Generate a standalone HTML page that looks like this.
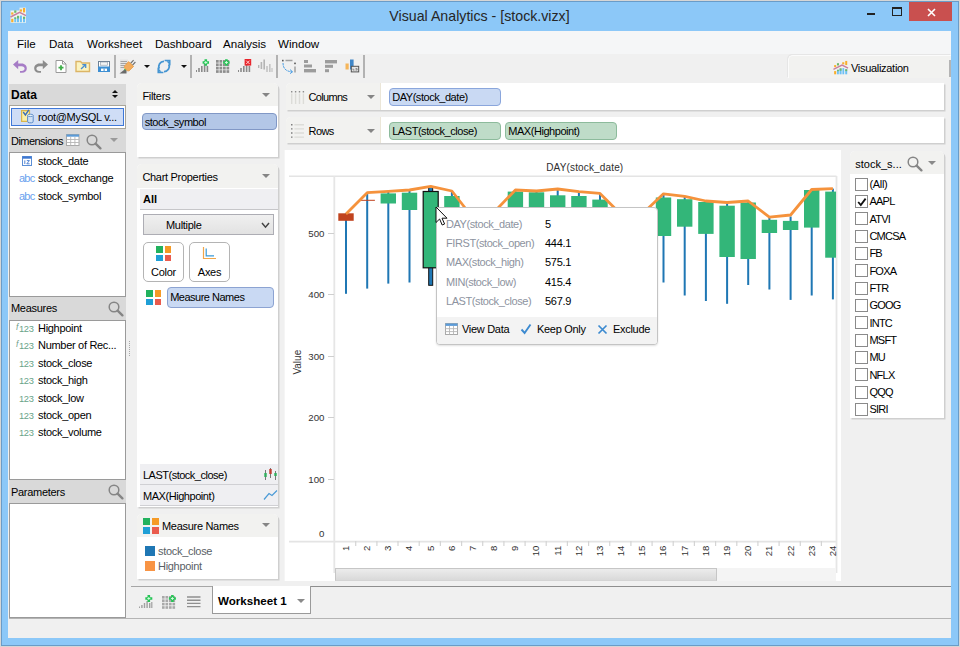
<!DOCTYPE html>
<html><head><meta charset="utf-8"><title>Visual Analytics - [stock.vizx]</title>
<style>
*{box-sizing:border-box;margin:0;padding:0}
html,body{width:960px;height:647px;overflow:hidden}
body{position:relative;background:#d6d6d6;font-family:"Liberation Sans",sans-serif;font-size:11px;color:#000;letter-spacing:-.3px}
.a{position:absolute}
.t{position:absolute;white-space:nowrap;line-height:14px;height:14px}
.lb{position:absolute;background:#fff;border:1px solid #9a9a9a}
.hd{position:absolute;background:#d9d9d9}
.card{position:absolute;background:#fff;border-radius:5px 5px 0 0;box-shadow:1.5px 1.5px .6px #cfcfcf}
.ch{position:absolute;left:0;top:0;right:0;background:#f2f2f0;border-radius:5px 5px 0 0}
.pill{position:absolute;border-radius:4px;border:1px solid #8fa6d3;background:#b3c7e7;line-height:16px;padding-left:2.2px;white-space:nowrap;height:18px;letter-spacing:-.45px}
.tri{position:absolute;width:0;height:0;border-left:4px solid transparent;border-right:4px solid transparent;border-top:4px solid #858585}
.cb{position:absolute;left:855px;width:12.6px;height:12.6px;border:1px solid #8a8a8a;background:#fff}
.cl{position:absolute;left:869.4px;line-height:14px;height:14px;white-space:nowrap}
.mi{position:absolute;top:35.7px;font-size:11.6px;letter-spacing:0;line-height:16px;white-space:nowrap}
</style></head><body>
<div class="a" style="left:1px;top:1px;width:958px;height:645px;border:1px solid #6a9cc8;background:#8cc8f8"></div>
<div class="t" style="left:0;width:960px;top:7px;text-align:center;font-size:14.2px;line-height:18px;height:18px;letter-spacing:0;color:#262626;text-indent:-1px">Visual Analytics - [stock.vizx]</div>
<!-- app icon -->
<svg class="a" style="left:10px;top:7px" width="17" height="17" viewBox="0 0 17 17">
<rect x=".5" y="3.5" width="15.5" height="12.3" fill="#f8f7ee" opacity=".92"/><rect x="9.5" y=".6" width="6.5" height="4" fill="#f8f7ee" opacity=".8"/>
<rect x="1.2" y="11.8" width="2.2" height="3.4" fill="#f8ae2c"/>
<rect x="4.3" y="10.4" width="1.9" height="4.8" fill="#6cc0f6"/><rect x="4.3" y="10.4" width="1.9" height="1.5" fill="#6db86b"/>
<rect x="7" y="9.2" width="2.1" height="6" fill="#6cc0f6"/><rect x="7" y="8.8" width="2.1" height="2.6" fill="#6db86b"/>
<rect x="10" y="8.6" width="1.9" height="6.6" fill="#6cc0f6"/>
<rect x="13" y="9.8" width="2.1" height="5.4" fill="#6cc0f6"/><rect x="13" y="9.8" width="2.1" height="2" fill="#6db86b"/>
<rect x="1.2" y="5.4" width="2.2" height="2.2" fill="#f8ae2c"/><rect x="4.2" y="3.4" width="2.2" height="2.4" fill="#6db86b"/>
<rect x="9.8" y="2.4" width="2.2" height="2.2" fill="#f8ae2c"/><rect x="13" y="1" width="2.1" height="4.4" fill="#f8ae2c"/>
<path d="M.5 10 L9.6 5.4 L16 8.6" fill="none" stroke="#c9809f" stroke-width="1.5"/>
</svg>
<!-- window buttons -->
<div class="a" style="left:867px;top:13px;width:8px;height:2px;background:#222"></div>
<div class="a" style="left:892px;top:7px;width:10px;height:9px;border:1px solid #222;border-top-width:2px"></div>
<div class="a" style="left:909px;top:2px;width:43px;height:19px;background:#c9504f"></div>
<svg class="a" style="left:926.5px;top:7.5px" width="9" height="9" viewBox="0 0 9 9"><path d="M1 1 L8 8 M8 1 L1 8" stroke="#fff" stroke-width="1.6" fill="none"/></svg>
<div class="a" style="left:8px;top:31px;width:943px;height:607px;background:#f0f0f0"></div>
<div class="a" style="left:8px;top:31px;width:943px;height:23px;background:#f5f6f7"></div>
<div class="mi" style="left:17px">File</div>
<div class="mi" style="left:49px">Data</div>
<div class="mi" style="left:87px">Worksheet</div>
<div class="mi" style="left:155px">Dashboard</div>
<div class="mi" style="left:223px">Analysis</div>
<div class="mi" style="left:278px">Window</div>
<!-- toolbar -->
<svg class="a" style="left:12px;top:59px" width="16" height="15" viewBox="0 0 16 15"><path d="M6.2 1 L1 5.6 L6.2 10.2 V7.2 H9.5 C11.6 7.2 12.6 8.3 12.6 9.6 C12.6 11 11.5 11.9 9.8 11.9 H8 V13.8 H10 C13 13.8 14.8 12 14.8 9.6 C14.8 7 13 4.6 9.6 4.6 H6.2 Z" fill="#a67cc6"/></svg>
<svg class="a" style="left:33px;top:59px" width="16" height="15" viewBox="0 0 16 15"><path d="M9.8 1 L15 5.6 L9.8 10.2 V7.2 H6.5 C4.4 7.2 3.4 8.3 3.4 9.6 C3.4 11 4.5 11.9 6.2 11.9 H8 V13.8 H6 C3 13.8 1.2 12 1.2 9.6 C1.2 7 3 4.6 6.4 4.6 H9.8 Z" fill="#8c8c8c"/></svg>
<svg class="a" style="left:55px;top:60px" width="12" height="14" viewBox="0 0 12 14"><path d="M1 .5 H7.5 L11 4 V12.5 H1 Z" fill="#fff" stroke="#9a9a9a"/><path d="M7.5 .5 V4 H11" fill="none" stroke="#9a9a9a"/><path d="M6 5.2 V10.2 M3.5 7.7 H8.5" stroke="#3fae49" stroke-width="1.8"/></svg>
<svg class="a" style="left:75px;top:60px" width="16" height="13" viewBox="0 0 16 13"><path d="M1 1.5 H5.5 L7 3 H14.5 V11.5 H1 Z" fill="#fbf3c0" stroke="#dcb566" stroke-width="1.4"/><path d="M6 9 L10.5 4.8 M7.3 4.6 H10.7 V8" fill="none" stroke="#4a8fd0" stroke-width="1.3"/></svg>
<svg class="a" style="left:97px;top:60px" width="14" height="13" viewBox="0 0 14 13"><rect x="1.5" y="1.5" width="11" height="10" fill="#fff" stroke="#6f8296" stroke-width="1"/><rect x="1" y="6.5" width="12" height="5.5" fill="#3d8fd3"/><rect x="3.6" y="2" width="6.8" height="3.2" fill="#f4f4f4" stroke="#8796a6" stroke-width=".6"/><rect x="4" y="8.6" width="6" height="2.4" fill="#fff"/><rect x="6.6" y="8.6" width="1" height="2.4" fill="#3d8fd3"/></svg>
<div class="a" style="left:114px;top:55px;width:2px;height:23px;background:#b2b2b2"></div>
<svg class="a" style="left:119px;top:59px" width="17" height="15" viewBox="0 0 17 15"><rect x="1" y=".5" width="8" height="13" fill="#e4e4e4"/><path d="M1.5 2.5 H8 M1.5 4.5 H8 M1.5 6.5 H6 M1.5 8.5 H5" stroke="#a4a4a4" stroke-width="1"/><path d="M.5 14.5 L7.5 14.5 L7.5 9 Z" fill="#6a6a6a"/><path d="M5.6 11 L7 9.6" stroke="#27c24c" stroke-width="1.6"/><path d="M11.5 4.5 L14.6 1.2 M13.3 6.3 L16.4 3" stroke="#6e6e6e" stroke-width="1.1"/><path d="M5.4 7.2 L9.6 2.6 L14.6 7.4 L10.2 11.8 C8.6 12.6 5 9.6 5.4 7.2 Z" fill="#f2ac5c" stroke="#e79a42" stroke-width=".8"/></svg>
<div class="tri" style="left:144px;top:65px;border-left-width:3px;border-right-width:3px;border-top:3px solid #111"></div>
<svg class="a" style="left:156px;top:59px" width="16" height="15" viewBox="0 0 16 15"><path d="M8 2.4 A5.1 5.1 0 0 0 3.2 9.6" fill="none" stroke="#4595d2" stroke-width="1.8"/><path d="M8 12.6 A5.1 5.1 0 0 0 12.8 5.4" fill="none" stroke="#4595d2" stroke-width="1.8"/><path d="M8.6 1.5 H13.7 V6.4" fill="none" stroke="#4595d2" stroke-width="1.7"/><path d="M7.4 13.5 H2.3 V8.6" fill="none" stroke="#4595d2" stroke-width="1.7"/><path d="M10.4 2.2 L13 2.2 L13 5 Z M5.6 12.8 L3 12.8 L3 10 Z" fill="#4595d2"/></svg>
<div class="tri" style="left:181px;top:65px;border-left-width:3px;border-right-width:3px;border-top:3px solid #111"></div>
<div class="a" style="left:190px;top:55px;width:2px;height:23px;background:#b2b2b2"></div>
<svg class="a" style="left:196px;top:59px" width="14" height="14" viewBox="0 0 14 14"><rect x="0" y="11" width="1" height="2" fill="#8a8a8a"/><rect x="2.2" y="9" width="1.6" height="4" fill="#8a8a8a"/><rect x="5" y="7" width="1.6" height="6" fill="#8a8a8a"/><rect x="7.8" y="5" width="1.6" height="8" fill="#8a8a8a"/><rect x="10.6" y="7" width="1.6" height="6" fill="#8a8a8a"/><path d="M9.8 .3 v6.4 M6.6 3.5 h6.4" stroke="#25c455" stroke-width="2.6"/><path d="M9.8 2 v3 M8.3 3.5 h3" stroke="#d8ffe2" stroke-width=".9"/></svg>
<svg class="a" style="left:216px;top:59px" width="15" height="14" viewBox="0 0 15 14"><rect x="0" y="1" width="2.7" height="2.7" fill="#8e8e8e"/><rect x="3.5" y="1" width="2.7" height="2.7" fill="#8e8e8e"/><rect x="7" y="1" width="2.7" height="2.7" fill="#8e8e8e"/><rect x="10.5" y="1" width="2.7" height="2.7" fill="#8e8e8e"/><rect x="0" y="4.4" width="2.7" height="2.7" fill="#8e8e8e"/><rect x="3.5" y="4.4" width="2.7" height="2.7" fill="#8e8e8e"/><rect x="7" y="4.4" width="2.7" height="2.7" fill="#8e8e8e"/><rect x="10.5" y="4.4" width="2.7" height="2.7" fill="#8e8e8e"/><rect x="0" y="7.8" width="2.7" height="2.7" fill="#8e8e8e"/><rect x="3.5" y="7.8" width="2.7" height="2.7" fill="#8e8e8e"/><rect x="7" y="7.8" width="2.7" height="2.7" fill="#8e8e8e"/><rect x="10.5" y="7.8" width="2.7" height="2.7" fill="#8e8e8e"/><rect x="0" y="11.2" width="2.7" height="2.7" fill="#8e8e8e"/><rect x="3.5" y="11.2" width="2.7" height="2.7" fill="#8e8e8e"/><rect x="7" y="11.2" width="2.7" height="2.7" fill="#8e8e8e"/><rect x="10.5" y="11.2" width="2.7" height="2.7" fill="#8e8e8e"/><path d="M10.4 .3 v6.4 M7.2 3.5 h6.4" stroke="#25c455" stroke-width="2.6"/><path d="M10.4 2 v3 M8.9 3.5 h3" stroke="#d8ffe2" stroke-width=".9"/></svg>
<svg class="a" style="left:238px;top:59px" width="14" height="14" viewBox="0 0 14 14"><rect x="0" y="11" width="1" height="2" fill="#8a8a8a"/><rect x="2.2" y="9" width="1.6" height="4" fill="#8a8a8a"/><rect x="5" y="7" width="1.6" height="6" fill="#8a8a8a"/><rect x="7.8" y="5" width="1.6" height="8" fill="#8a8a8a"/><rect x="10.6" y="7" width="1.6" height="6" fill="#8a8a8a"/><rect x="6.6" y="0" width="6.6" height="6.6" fill="#e8262d"/><path d="M8.2 1.6 l3.4 3.4 M11.6 1.6 l-3.4 3.4" stroke="#ffd0d0" stroke-width="1"/></svg>
<svg class="a" style="left:258px;top:59px" width="15" height="14" viewBox="0 0 15 14"><rect x="0" y="6" width="1.4" height="3" fill="#b4b4b4"/><rect x="2.6" y="3" width="1.6" height="7" fill="#b4b4b4"/><rect x="5.4" y="0.5" width="1.6" height="10" fill="#b4b4b4"/><rect x="8.2" y="7" width="1.6" height="6" fill="#c4c4c4"/><rect x="11" y="5" width="1.6" height="8" fill="#c4c4c4"/><rect x="13.4" y="9" width="1.2" height="4" fill="#c4c4c4"/></svg>
<div class="a" style="left:276px;top:55px;width:2px;height:23px;background:#b2b2b2"></div>
<svg class="a" style="left:281px;top:59px" width="16" height="15" viewBox="0 0 16 15"><path d="M4.5 1.5 H11.5" stroke="#a0a0a0" stroke-width="1.5"/><rect x="1" y=".8" width="1.6" height="1.6" fill="#555"/><rect x="13.2" y="3.6" width="1.6" height="1.6" fill="#555"/><path d="M14 7.5 V13.5" stroke="#a0a0a0" stroke-width="1.5"/><path d="M2 4 C2 9.5 5 12.5 11 12.8" fill="none" stroke="#4a9ee4" stroke-width="1" stroke-dasharray="2.4 .8"/><path d="M9 10.6 L11.6 12.8 L9 14.6" fill="none" stroke="#4a9ee4" stroke-width="1"/></svg>
<svg class="a" style="left:304px;top:59px" width="13" height="14" viewBox="0 0 13 14"><rect x="0" y="1" width="4" height="3" fill="#9c9c9c"/><rect x="0" y="5.5" width="8" height="3" fill="#9c9c9c"/><rect x="0" y="10" width="12" height="3.4" fill="#9c9c9c"/></svg>
<svg class="a" style="left:325px;top:59px" width="13" height="14" viewBox="0 0 13 14"><rect x="0" y="1" width="12" height="3.4" fill="#9c9c9c"/><rect x="0" y="5.8" width="8" height="3" fill="#9c9c9c"/><rect x="0" y="10.2" width="4" height="3" fill="#9c9c9c"/></svg>
<svg class="a" style="left:345px;top:59px" width="15" height="14" viewBox="0 0 15 14"><rect x="0.5" y="4.5" width="3.2" height="6" fill="#f5b55a"/><rect x="5" y="0.5" width="3.6" height="10" fill="#3f86c8"/><rect x="6.3" y="7.3" width="7.4" height="5.6" fill="#e6e6e6" stroke="#555" stroke-width="1"/><path d="M8 11 h1.5 M10.5 11 h1.6 M8 9.6 v1.5 M10.5 9.6 h1.6 v1.5" stroke="#666" stroke-width=".7" fill="none"/></svg>
<div class="a" style="left:363px;top:55px;width:2px;height:23px;background:#b2b2b2"></div>
<div class="a" style="left:788px;top:55px;width:163px;height:23px;background:#f2f2f0;border:1px solid #fbfbfb;border-bottom:none;border-right:none;border-radius:5px 0 0 0;box-shadow:-1px -1px 0 #e6e6e6"></div>
<div class="a" style="left:949px;top:60px;width:2px;height:17px;background:#b4b4b4"></div>
<svg class="a" style="left:833px;top:60px" width="16" height="16" viewBox="0 0 17 17">
<rect x="1.2" y="11.8" width="2.2" height="3.4" fill="#f8ae2c"/>
<rect x="4.3" y="10.4" width="1.9" height="4.8" fill="#6cc0f6"/><rect x="4.3" y="10.4" width="1.9" height="1.5" fill="#6db86b"/>
<rect x="7" y="9.2" width="2.1" height="6" fill="#6cc0f6"/><rect x="7" y="8.8" width="2.1" height="2.6" fill="#6db86b"/>
<rect x="10" y="8.6" width="1.9" height="6.6" fill="#6cc0f6"/>
<rect x="13" y="9.8" width="2.1" height="5.4" fill="#6cc0f6"/><rect x="13" y="9.8" width="2.1" height="2" fill="#6db86b"/>
<rect x="1.2" y="5.4" width="2.2" height="2.2" fill="#f8ae2c"/><rect x="4.2" y="3.4" width="2.2" height="2.4" fill="#6db86b"/>
<rect x="9.8" y="2.4" width="2.2" height="2.2" fill="#f8ae2c"/><rect x="13" y="1" width="2.1" height="4.4" fill="#f8ae2c"/>
<path d="M.5 10 L9.6 5.4 L16 8.6" fill="none" stroke="#c9809f" stroke-width="1.5"/></svg>
<div class="t" style="left:851px;top:61px">Visualization</div>
<!-- left data panel -->
<div class="hd" style="left:9px;top:84px;width:117px;height:22px"></div>
<div class="t" style="left:11px;top:88px;font-weight:bold;font-size:12px;letter-spacing:0">Data</div>
<div class="tri" style="left:112px;top:95.3px;border-left-width:3px;border-right-width:3px;border-top:3px solid #111"></div>
<div class="tri" style="left:112px;top:90.3px;border-left-width:3px;border-right-width:3px;border-top:none;border-bottom:3px solid #111"></div>
<div class="lb" style="left:9px;top:105px;width:117px;height:24px;border-color:#a8a59a"></div>
<div class="a" style="left:11px;top:108px;width:113px;height:18px;background:#cfddf6;border:1px solid #3f78d8"></div>
<svg class="a" style="left:21px;top:109px" width="14" height="15" viewBox="0 0 14 15"><path d="M.6 1.6 H8.5 V12.4 H.6 Z" fill="#fbf0a8" stroke="#d9b54a" stroke-width="1.2"/><path d="M2.2 3 L4.4 6 L7.8 .8" fill="none" stroke="#3c6fb8" stroke-width="1.4"/><rect x="6.6" y="5.8" width="5.6" height="8" rx="1.6" fill="#cfe0f4" stroke="#5e8cc8" stroke-width="1"/><ellipse cx="9.4" cy="6.4" rx="2.8" ry="1.2" fill="#e8f1fb" stroke="#5e8cc8" stroke-width=".9"/></svg>
<div class="t" style="left:38px;top:110px">root@MySQL v...</div>
<div class="hd" style="left:9px;top:129px;width:117px;height:24px"></div>
<div class="t" style="left:11px;top:134px;letter-spacing:-.55px">Dimensions</div>
<svg class="a" style="left:66px;top:134px" width="14" height="12" viewBox="0 0 14 12"><rect x=".5" y=".5" width="12.5" height="11" fill="#fff" stroke="#a9a9a9"/><rect x=".5" y=".5" width="12.5" height="2.2" fill="#5b9bd8"/><path d="M.5 5.5 H13 M.5 8.5 H13 M4.7 2.7 V11.5 M8.9 2.7 V11.5" stroke="#b5b5b5" stroke-width=".9"/></svg>
<svg class="a" style="left:86px;top:134px" width="16" height="16" viewBox="0 0 16 16"><circle cx="6" cy="6" r="4.8" fill="none" stroke="#858585" stroke-width="1.5"/><path d="M9.6 9.6 L14.4 14.4" stroke="#858585" stroke-width="2.3" stroke-linecap="round"/></svg>
<div class="tri" style="left:110px;top:138px;border-top-color:#9a9a9a"></div>
<div class="lb" style="left:9px;top:152px;width:117px;height:145px"></div>
<svg class="a" style="left:22px;top:156px" width="10" height="10" viewBox="0 0 10 10"><rect x=".5" y=".5" width="9" height="9" fill="#fff" stroke="#5c8fd6"/><rect x=".5" y=".5" width="9" height="2.2" fill="#3f78d0"/><path d="M2.8 4.4 V8 M4.8 4.6 H7.4 L4.8 7.8 H7.6" stroke="#3f78d0" stroke-width=".9" fill="none"/></svg>
<div class="t" style="left:38px;top:154px">stock_date</div>
<div class="t" style="left:38px;top:171px">stock_exchange</div>
<div class="t" style="left:19px;top:171px;color:#6a9fee;font-size:11px;letter-spacing:-.75px">abc</div>
<div class="t" style="left:38px;top:188.5px">stock_symbol</div>
<div class="t" style="left:19px;top:188.5px;color:#6a9fee;font-size:11px;letter-spacing:-.75px">abc</div>
<div class="hd" style="left:9px;top:297px;width:117px;height:23px"></div>
<div class="t" style="left:11px;top:301px">Measures</div>
<svg class="a" style="left:108px;top:301px" width="16" height="16" viewBox="0 0 16 16"><circle cx="6" cy="6" r="4.8" fill="none" stroke="#858585" stroke-width="1.5"/><path d="M9.6 9.6 L14.4 14.4" stroke="#858585" stroke-width="2.3" stroke-linecap="round"/></svg>
<div class="lb" style="left:9px;top:320px;width:117px;height:160px"></div>
<div class="t" style="left:38px;top:321px">Highpoint</div>
<div class="t" style="left:19px;top:322px;color:#68a388;font-size:9.3px;letter-spacing:-.3px">123</div>
<div class="t" style="left:16px;top:320px;color:#6fa08c;font-size:8.5px;font-style:italic">f</div>
<div class="t" style="left:38px;top:338px">Number of Rec...</div>
<div class="t" style="left:19px;top:339px;color:#68a388;font-size:9.3px;letter-spacing:-.3px">123</div>
<div class="t" style="left:16px;top:337px;color:#6fa08c;font-size:8.5px;font-style:italic">f</div>
<div class="t" style="left:38px;top:356px">stock_close</div>
<div class="t" style="left:19px;top:357px;color:#68a388;font-size:9.3px;letter-spacing:-.3px">123</div>
<div class="t" style="left:38px;top:373px">stock_high</div>
<div class="t" style="left:19px;top:374px;color:#68a388;font-size:9.3px;letter-spacing:-.3px">123</div>
<div class="t" style="left:38px;top:391px">stock_low</div>
<div class="t" style="left:19px;top:392px;color:#68a388;font-size:9.3px;letter-spacing:-.3px">123</div>
<div class="t" style="left:38px;top:408px">stock_open</div>
<div class="t" style="left:19px;top:409px;color:#68a388;font-size:9.3px;letter-spacing:-.3px">123</div>
<div class="t" style="left:38px;top:425px">stock_volume</div>
<div class="t" style="left:19px;top:426px;color:#68a388;font-size:9.3px;letter-spacing:-.3px">123</div>
<div class="a" style="left:129px;top:341px;width:1px;height:15px;background:repeating-linear-gradient(#a8a8a8 0 1px,transparent 1px 2px)"></div>
<div class="hd" style="left:9px;top:480px;width:117px;height:23px"></div>
<div class="t" style="left:11px;top:485px">Parameters</div>
<svg class="a" style="left:108px;top:484px" width="16" height="16" viewBox="0 0 16 16"><circle cx="6" cy="6" r="4.8" fill="none" stroke="#858585" stroke-width="1.5"/><path d="M9.6 9.6 L14.4 14.4" stroke="#858585" stroke-width="2.3" stroke-linecap="round"/></svg>
<div class="lb" style="left:9px;top:503px;width:117px;height:115px"></div>
<!-- middle column -->
<div class="card" style="left:137.3px;top:83.4px;width:140.8px;height:73.7px"><div class="ch" style="height:23px"></div></div>
<div class="t" style="left:142.4px;top:89px">Filters</div>
<div class="tri" style="left:262px;top:93px"></div>
<div class="pill" style="left:141.5px;top:112.5px;width:135px;height:17.5px;border-color:#8198c6">stock_symbol</div>
<div class="card" style="left:137.3px;top:164.3px;width:140.8px;height:342.4px"><div class="ch" style="height:24px"></div></div>
<div class="t" style="left:142.4px;top:170px">Chart Properties</div>
<div class="tri" style="left:262px;top:174px"></div>
<div class="a" style="left:139.5px;top:188.8px;width:138.6px;height:21px;background:#efeff2;border-bottom:1px solid #c6c6c9"></div>
<div class="t" style="left:143px;top:192px;font-weight:bold;letter-spacing:0">All</div>
<div class="a" style="left:143.3px;top:214.3px;width:131px;height:20.6px;background:linear-gradient(#f0f0f0,#e2e2e2);border:1px solid #adadb4"></div>
<div class="t" style="left:166px;top:218px">Multiple</div>
<svg class="a" style="left:261px;top:221.8px" width="9" height="7" viewBox="0 0 9 7"><path d="M1 1 L4.5 5.2 L8 1" fill="none" stroke="#444" stroke-width="1.5"/></svg>
<div class="a" style="left:143px;top:242px;width:41px;height:40px;background:#fff;border:1px solid #b4b4b4;border-radius:5px"></div>
<div class="a" style="left:156px;top:246px;width:6.8px;height:6.8px;background:#22b25e"></div><div class="a" style="left:164.6px;top:246px;width:6.8px;height:6.8px;background:#f59a26"></div><div class="a" style="left:156px;top:254.6px;width:6.8px;height:6.8px;background:#1f9fd6"></div><div class="a" style="left:164.6px;top:254.6px;width:6.8px;height:6.8px;background:#ea5b4d"></div>
<div class="t" style="left:143px;top:265px;width:41px;text-align:center">Color</div>
<div class="a" style="left:189px;top:242px;width:41px;height:40px;background:#fff;border:1px solid #b4b4b4;border-radius:5px"></div>
<svg class="a" style="left:202px;top:246px" width="15" height="14" viewBox="0 0 15 14"><path d="M1.5 1 V12.5 H14" fill="none" stroke="#f0a64a" stroke-width="1.2"/><path d="M4.2 2.5 V9.8 H12" fill="none" stroke="#3a9bd8" stroke-width="1.2"/></svg>
<div class="t" style="left:189px;top:265px;width:41px;text-align:center">Axes</div>
<div class="a" style="left:146px;top:290px;width:6.8px;height:6.8px;background:#22b25e"></div><div class="a" style="left:154.6px;top:290px;width:6.8px;height:6.8px;background:#f59a26"></div><div class="a" style="left:146px;top:298.6px;width:6.8px;height:6.8px;background:#1f9fd6"></div><div class="a" style="left:154.6px;top:298.6px;width:6.8px;height:6.8px;background:#ea5b4d"></div>
<div class="pill" style="left:167px;top:287px;width:107px;height:21px;line-height:19px;background:#c9d9f3;border-color:#8ca3d2;letter-spacing:-.5px">Measure Names</div>
<div class="a" style="left:139.5px;top:464px;width:138.6px;height:21px;background:#efeff2;border-bottom:1px solid #d0d0d4"></div>
<div class="a" style="left:139.5px;top:485px;width:138.6px;height:21px;background:#efeff2;border-bottom:1px solid #d0d0d4"></div>
<div class="t" style="left:143px;top:468px;letter-spacing:-.5px">LAST(stock_close)</div>
<div class="t" style="left:143px;top:489px;letter-spacing:-.45px">MAX(Highpoint)</div>
<svg class="a" style="left:263px;top:467px" width="15" height="14" viewBox="0 0 15 14"><path d="M2.5 3 V13 M7.5 1 V11 M12.5 4 V13" stroke="#777" stroke-width="1"/><rect x="1.3" y="6" width="2.4" height="4" fill="#2fae5c"/><rect x="6.3" y="2" width="2.4" height="5" fill="#c23b2e"/><rect x="11.3" y="6" width="2.4" height="3" fill="#2fae5c"/></svg>
<svg class="a" style="left:263px;top:489px" width="15" height="12" viewBox="0 0 15 12"><path d="M1 10.5 L6 4.5 L9 6.5 L14 1.5" fill="none" stroke="#4a9ad6" stroke-width="1.2"/></svg>
<div class="card" style="left:137.3px;top:513.6px;width:140.8px;height:65.4px"><div class="ch" style="height:23px"></div></div>
<div class="a" style="left:143px;top:518px;width:7px;height:7px;background:#22b25e"></div><div class="a" style="left:152px;top:518px;width:7px;height:7px;background:#f59a26"></div><div class="a" style="left:143px;top:527px;width:7px;height:7px;background:#1f9fd6"></div><div class="a" style="left:152px;top:527px;width:7px;height:7px;background:#ea5b4d"></div>
<div class="t" style="left:162px;top:519px">Measure Names</div>
<div class="tri" style="left:262px;top:523px"></div>
<div class="a" style="left:145px;top:546px;width:10px;height:10px;background:#1f77b4"></div>
<div class="t" style="left:158px;top:544px;color:#5a5f66">stock_close</div>
<div class="a" style="left:145px;top:561px;width:10px;height:10px;background:#f89444"></div>
<div class="t" style="left:158px;top:559px;color:#5a5f66">Highpoint</div>
<div class="card" style="left:285.6px;top:83.4px;width:658.4px;height:26.5px;border-radius:5px 0 0 0"><div class="a" style="left:0;top:0;width:95.5px;height:100%;background:#f2f2f0;border-radius:5px 0 0 0;border-right:1px solid #ebe6d8"></div></div>
<div class="t" style="left:308.6px;top:90px;letter-spacing:-.7px">Columns</div>
<div class="tri" style="left:367px;top:95px"></div>
<div class="pill" style="left:389px;top:88px;width:112px;background:#c9d9f3;border-color:#8aa6dc">DAY(stock_date)</div>
<div class="card" style="left:285.6px;top:116.7px;width:658.4px;height:26.4px;border-radius:5px 0 0 0"><div class="a" style="left:0;top:0;width:95.5px;height:100%;background:#f2f2f0;border-radius:5px 0 0 0;border-right:1px solid #ebe6d8"></div></div>
<div class="t" style="left:308.6px;top:124px;letter-spacing:-.6px">Rows</div>
<div class="tri" style="left:367px;top:129px"></div>
<div class="pill" style="left:389px;top:122px;width:112px;background:#bfdcc8;border-color:#8dbb9c">LAST(stock_close)</div>
<div class="pill" style="left:505px;top:122px;width:112px;background:#bfdcc8;border-color:#8dbb9c">MAX(Highpoint)</div>
<svg class="a" style="left:290px;top:90px" width="16" height="15" viewBox="0 0 16 15"><path d="M1.7 3.4 V14 M5.6 3.4 V14 M9.5 3.4 V14 M13.4 3.4 V14" stroke="#dcdcd8" stroke-width="1.4"/><path d="M1.7 1 V2.5 M5.6 1 V2.5 M9.5 1 V2.5 M13.4 1 V2.5" stroke="#8e8e8e" stroke-width="1.4"/></svg>
<svg class="a" style="left:290px;top:123px" width="16" height="16" viewBox="0 0 16 16"><path d="M4.4 1.8 H14 M4.4 5.9 H14 M4.4 10 H14 M4.4 14.1 H14" stroke="#dcdcd8" stroke-width="1.4"/><path d="M1 1.8 H2.5 M1 5.9 H2.5 M1 10 H2.5 M1 14.1 H2.5" stroke="#7e7e7e" stroke-width="1.4"/></svg>
<!-- chart panel -->
<div class="a" style="left:284px;top:150px;width:1px;height:431px;background:#f5f5f5"></div>
<div class="a" style="left:285px;top:150px;width:556px;height:431px;background:#fff"></div>
<svg class="a" style="left:285px;top:150px;font-family:'Liberation Sans',sans-serif;letter-spacing:0" width="556" height="431" viewBox="285 150 556 431">
<text x="584.8" y="171" font-size="10" letter-spacing=".15" text-anchor="middle" fill="#2e2e2e">DAY(stock_date)</text>
<path d="M289 176.3 H836.5 M289 541.6 H836.5" stroke="#e4e4e4" stroke-width="1.6" fill="none"/>
<path d="M334.3 176 V573 M836.5 176 V573" stroke="#e6e6e6" stroke-width="1.8" fill="none"/>
<path d="M328 479.5 H334" stroke="#cfcfcf" stroke-width="1"/><text x="324.5" y="482.9" font-size="9.7" text-anchor="end" fill="#333">100</text>
<path d="M328 417.5 H334" stroke="#cfcfcf" stroke-width="1"/><text x="324.5" y="421.3" font-size="9.7" text-anchor="end" fill="#333">200</text>
<path d="M328 356.5 H334" stroke="#cfcfcf" stroke-width="1"/><text x="324.5" y="359.7" font-size="9.7" text-anchor="end" fill="#333">300</text>
<path d="M328 294.5 H334" stroke="#cfcfcf" stroke-width="1"/><text x="324.5" y="298.1" font-size="9.7" text-anchor="end" fill="#333">400</text>
<path d="M328 233.5 H334" stroke="#cfcfcf" stroke-width="1"/><text x="324.5" y="236.5" font-size="9.7" text-anchor="end" fill="#333">500</text>
<text x="324.5" y="536.8" font-size="9.7" text-anchor="end" fill="#333">0</text>
<text transform="translate(301,362.2) rotate(-90)" font-size="10" text-anchor="middle" fill="#333">Value</text>
<path d="M355.7 541 V546" stroke="#d4d4d4" stroke-width="1.2"/><text transform="translate(348.9,545.7) rotate(-90)" font-size="9.6" text-anchor="end" fill="#333">1</text>
<path d="M376.9 541 V546" stroke="#d4d4d4" stroke-width="1.2"/><text transform="translate(370.1,545.7) rotate(-90)" font-size="9.6" text-anchor="end" fill="#333">2</text>
<path d="M398.0 541 V546" stroke="#d4d4d4" stroke-width="1.2"/><text transform="translate(391.2,545.7) rotate(-90)" font-size="9.6" text-anchor="end" fill="#333">3</text>
<path d="M419.2 541 V546" stroke="#d4d4d4" stroke-width="1.2"/><text transform="translate(412.4,545.7) rotate(-90)" font-size="9.6" text-anchor="end" fill="#333">4</text>
<path d="M440.4 541 V546" stroke="#d4d4d4" stroke-width="1.2"/><text transform="translate(433.6,545.7) rotate(-90)" font-size="9.6" text-anchor="end" fill="#333">5</text>
<path d="M461.6 541 V546" stroke="#d4d4d4" stroke-width="1.2"/><text transform="translate(454.8,545.7) rotate(-90)" font-size="9.6" text-anchor="end" fill="#333">6</text>
<path d="M482.7 541 V546" stroke="#d4d4d4" stroke-width="1.2"/><text transform="translate(475.9,545.7) rotate(-90)" font-size="9.6" text-anchor="end" fill="#333">7</text>
<path d="M503.9 541 V546" stroke="#d4d4d4" stroke-width="1.2"/><text transform="translate(497.1,545.7) rotate(-90)" font-size="9.6" text-anchor="end" fill="#333">8</text>
<path d="M525.1 541 V546" stroke="#d4d4d4" stroke-width="1.2"/><text transform="translate(518.3,545.7) rotate(-90)" font-size="9.6" text-anchor="end" fill="#333">9</text>
<path d="M546.2 541 V546" stroke="#d4d4d4" stroke-width="1.2"/><text transform="translate(539.4,545.7) rotate(-90)" font-size="9.6" text-anchor="end" fill="#333">10</text>
<path d="M567.4 541 V546" stroke="#d4d4d4" stroke-width="1.2"/><text transform="translate(560.6,545.7) rotate(-90)" font-size="9.6" text-anchor="end" fill="#333">11</text>
<path d="M588.6 541 V546" stroke="#d4d4d4" stroke-width="1.2"/><text transform="translate(581.8,545.7) rotate(-90)" font-size="9.6" text-anchor="end" fill="#333">12</text>
<path d="M609.7 541 V546" stroke="#d4d4d4" stroke-width="1.2"/><text transform="translate(602.9,545.7) rotate(-90)" font-size="9.6" text-anchor="end" fill="#333">13</text>
<path d="M630.9 541 V546" stroke="#d4d4d4" stroke-width="1.2"/><text transform="translate(624.1,545.7) rotate(-90)" font-size="9.6" text-anchor="end" fill="#333">14</text>
<path d="M652.1 541 V546" stroke="#d4d4d4" stroke-width="1.2"/><text transform="translate(645.3,545.7) rotate(-90)" font-size="9.6" text-anchor="end" fill="#333">15</text>
<path d="M673.2 541 V546" stroke="#d4d4d4" stroke-width="1.2"/><text transform="translate(666.4,545.7) rotate(-90)" font-size="9.6" text-anchor="end" fill="#333">16</text>
<path d="M694.4 541 V546" stroke="#d4d4d4" stroke-width="1.2"/><text transform="translate(687.6,545.7) rotate(-90)" font-size="9.6" text-anchor="end" fill="#333">17</text>
<path d="M715.6 541 V546" stroke="#d4d4d4" stroke-width="1.2"/><text transform="translate(708.8,545.7) rotate(-90)" font-size="9.6" text-anchor="end" fill="#333">18</text>
<path d="M736.8 541 V546" stroke="#d4d4d4" stroke-width="1.2"/><text transform="translate(730.0,545.7) rotate(-90)" font-size="9.6" text-anchor="end" fill="#333">19</text>
<path d="M757.9 541 V546" stroke="#d4d4d4" stroke-width="1.2"/><text transform="translate(751.1,545.7) rotate(-90)" font-size="9.6" text-anchor="end" fill="#333">20</text>
<path d="M779.1 541 V546" stroke="#d4d4d4" stroke-width="1.2"/><text transform="translate(772.3,545.7) rotate(-90)" font-size="9.6" text-anchor="end" fill="#333">21</text>
<path d="M800.3 541 V546" stroke="#d4d4d4" stroke-width="1.2"/><text transform="translate(793.5,545.7) rotate(-90)" font-size="9.6" text-anchor="end" fill="#333">22</text>
<path d="M821.4 541 V546" stroke="#d4d4d4" stroke-width="1.2"/><text transform="translate(814.6,545.7) rotate(-90)" font-size="9.6" text-anchor="end" fill="#333">23</text>
<text transform="translate(835.8,545.7) rotate(-90)" font-size="9.6" text-anchor="end" fill="#333">24</text>
<clipPath id="pc"><rect x="335" y="177" width="501" height="364"/></clipPath>
<g clip-path="url(#pc)">
<rect x="345.0" y="213.0" width="2" height="80.8" fill="#1f77b4"/><rect x="338.3" y="213.3" width="15.4" height="7.5" fill="#c0431e"/>
<rect x="366.2" y="194.0" width="2" height="94.6" fill="#1f77b4"/><rect x="359.5" y="199.8" width="15.4" height="1.0" fill="#c0431e"/>
<rect x="387.3" y="192.0" width="2" height="91.6" fill="#1f77b4"/><rect x="380.6" y="193.4" width="15.4" height="10.1" fill="#33b679"/>
<rect x="408.5" y="191.0" width="2" height="91.5" fill="#1f77b4"/><rect x="401.8" y="192.7" width="15.4" height="17.3" fill="#33b679"/>
<rect x="428.7" y="187.0" width="4" height="98.3" fill="#1f77b4" stroke="#111" stroke-width="1"/><rect x="423.2" y="191.5" width="15" height="76.3" fill="#33b679" stroke="#111" stroke-width="1.2"/>
<rect x="450.9" y="192.0" width="2" height="98.0" fill="#1f77b4"/><rect x="444.2" y="196.0" width="15.4" height="36.0" fill="#33b679"/>
<rect x="472.0" y="219.0" width="2" height="81.0" fill="#1f77b4"/><rect x="465.3" y="222.0" width="15.4" height="33.0" fill="#33b679"/>
<rect x="493.2" y="214.0" width="2" height="91.0" fill="#1f77b4"/><rect x="486.5" y="220.0" width="15.4" height="42.0" fill="#33b679"/>
<rect x="514.4" y="190.5" width="2" height="99.5" fill="#1f77b4"/><rect x="507.7" y="191.6" width="15.4" height="48.4" fill="#33b679"/>
<rect x="535.5" y="191.5" width="2" height="100.5" fill="#1f77b4"/><rect x="528.8" y="192.3" width="15.4" height="42.7" fill="#33b679"/>
<rect x="556.7" y="189.0" width="2" height="99.0" fill="#1f77b4"/><rect x="550.0" y="195.3" width="15.4" height="34.7" fill="#33b679"/>
<rect x="577.9" y="193.0" width="2" height="102.0" fill="#1f77b4"/><rect x="571.2" y="196.0" width="15.4" height="40.0" fill="#33b679"/>
<rect x="599.0" y="194.0" width="2" height="104.0" fill="#1f77b4"/><rect x="592.3" y="199.6" width="15.4" height="40.4" fill="#33b679"/>
<rect x="620.2" y="215.0" width="2" height="85.0" fill="#1f77b4"/><rect x="613.5" y="218.0" width="15.4" height="32.0" fill="#33b679"/>
<rect x="641.4" y="218.0" width="2" height="82.0" fill="#1f77b4"/><rect x="634.7" y="222.0" width="15.4" height="30.0" fill="#33b679"/>
<rect x="662.5" y="195.0" width="2" height="87.5" fill="#1f77b4"/><rect x="655.8" y="197.5" width="15.4" height="38.5" fill="#33b679"/>
<rect x="683.7" y="196.5" width="2" height="99.0" fill="#1f77b4"/><rect x="677.0" y="199.2" width="15.4" height="27.5" fill="#33b679"/>
<rect x="704.9" y="201.0" width="2" height="100.0" fill="#1f77b4"/><rect x="698.2" y="202.0" width="15.4" height="31.9" fill="#33b679"/>
<rect x="726.1" y="202.5" width="2" height="101.3" fill="#1f77b4"/><rect x="719.4" y="205.7" width="15.4" height="51.3" fill="#33b679"/>
<rect x="747.2" y="201.5" width="2" height="83.5" fill="#1f77b4"/><rect x="740.5" y="202.5" width="15.4" height="56.5" fill="#33b679"/>
<rect x="768.4" y="217.5" width="2" height="72.0" fill="#1f77b4"/><rect x="761.7" y="219.8" width="15.4" height="13.2" fill="#33b679"/>
<rect x="789.6" y="216.5" width="2" height="83.4" fill="#1f77b4"/><rect x="782.9" y="220.9" width="15.4" height="9.1" fill="#33b679"/>
<rect x="810.7" y="189.5" width="2" height="106.0" fill="#1f77b4"/><rect x="804.0" y="190.0" width="15.4" height="37.6" fill="#33b679"/>
<rect x="831.9" y="188.6" width="2" height="110.8" fill="#1f77b4"/><rect x="825.2" y="191.6" width="15.4" height="66.1" fill="#33b679"/>
<polyline points="346.0,214.0 367.2,192.7 388.3,191.3 409.5,190.0 430.7,186.3 451.9,191.0 473.0,218.0 494.2,212.0 515.4,190.0 536.5,191.0 557.7,189.0 578.9,191.6 600.0,193.4 621.2,214.4 642.4,213.8 663.5,193.8 684.7,196.4 705.9,201.0 727.1,202.5 748.2,201.0 769.4,217.2 790.6,215.0 811.7,189.5 832.9,188.6" fill="none" stroke="#f5923c" stroke-width="2.8" stroke-linejoin="round"/>
</g>
</svg>
<div class="a" style="left:335px;top:568px;width:501px;height:13px;background:#f4f4f4"></div>
<div class="a" style="left:335px;top:568px;width:382px;height:13px;background:linear-gradient(#ececec,#d9d9d9);border:1px solid #c6c6c6;border-bottom-color:#d4d4d4"></div>
<div class="a" style="left:436px;top:207px;width:222px;height:138px;background:#fff;border:1px solid #c4c4c4;border-radius:1px 4px 4px 4px;box-shadow:0 1px 2px rgba(0,0,0,.12)"></div>
<div class="a" style="left:437px;top:317px;width:220px;height:27px;background:#f3f3f3;border-radius:0 0 3px 3px"></div>
<div class="t" style="left:446px;top:217px;color:#8d93a0;letter-spacing:-.42px">DAY(stock_date)</div><div class="t" style="left:545px;top:217px">5</div>
<div class="t" style="left:446px;top:236px;color:#8d93a0;letter-spacing:-.42px">FIRST(stock_open)</div><div class="t" style="left:545px;top:236px">444.1</div>
<div class="t" style="left:446px;top:255px;color:#8d93a0;letter-spacing:-.42px">MAX(stock_high)</div><div class="t" style="left:545px;top:255px">575.1</div>
<div class="t" style="left:446px;top:275px;color:#8d93a0;letter-spacing:-.42px">MIN(stock_low)</div><div class="t" style="left:545px;top:275px">415.4</div>
<div class="t" style="left:446px;top:294px;color:#8d93a0;letter-spacing:-.42px">LAST(stock_close)</div><div class="t" style="left:545px;top:294px">567.9</div>
<svg class="a" style="left:445px;top:323px" width="13" height="12" viewBox="0 0 13 12"><rect x=".5" y=".5" width="12" height="11" fill="#fff" stroke="#a9a9a9"/><rect x=".5" y=".5" width="12" height="2.4" fill="#5b9bd8"/><path d="M.5 5.7 H12.5 M.5 8.6 H12.5 M4.5 2.9 V11.5 M8.5 2.9 V11.5" stroke="#b5b5b5" stroke-width=".9"/></svg>
<div class="t" style="left:462px;top:322px">View Data</div>
<svg class="a" style="left:520px;top:323px" width="12" height="12" viewBox="0 0 12 12"><path d="M1.5 6.5 L4.6 10 L10.5 1.5" fill="none" stroke="#3c8ad0" stroke-width="1.9"/></svg>
<div class="t" style="left:537px;top:322px">Keep Only</div>
<svg class="a" style="left:597px;top:324px" width="11" height="11" viewBox="0 0 11 11"><path d="M1.5 1.5 L9.5 9.5 M9.5 1.5 L1.5 9.5" fill="none" stroke="#3c8ad0" stroke-width="1.7"/></svg>
<div class="t" style="left:613px;top:322px">Exclude</div>
<svg class="a" style="left:435px;top:205.5px" width="14" height="21" viewBox="0 0 14 21"><path d="M1 1 V16.5 L4.6 13 L7.2 19 L9.6 18 L7 12.2 H12 Z" fill="#fff" stroke="#111" stroke-width="1" stroke-linejoin="round"/></svg>
<!-- right filter card -->
<div class="card" style="left:849.7px;top:150.6px;width:94.4px;height:267.6px"><div class="ch" style="height:23px"></div></div>
<div class="t" style="left:855.3px;top:157px;letter-spacing:0">stock_s...</div>
<svg class="a" style="left:907px;top:156px" width="16" height="16" viewBox="0 0 16 16"><circle cx="6" cy="6" r="4.8" fill="none" stroke="#858585" stroke-width="1.5"/><path d="M9.6 9.6 L14.4 14.4" stroke="#858585" stroke-width="2.3" stroke-linecap="round"/></svg>
<div class="tri" style="left:928px;top:161px;border-top-color:#8a8a8a"></div>
<div class="cb" style="top:178px"></div><div class="cl" style="top:177px;letter-spacing:-.3px">(All)</div>
<div class="cb" style="top:195px"></div><div class="cl" style="top:194px;letter-spacing:-.75px">AAPL</div>
<svg class="a" style="left:857px;top:197px" width="10" height="10" viewBox="0 0 10 10"><path d="M1.2 5 L3.8 8 L8.6 1.6" fill="none" stroke="#111" stroke-width="1.8"/></svg>
<div class="cb" style="top:212px"></div><div class="cl" style="top:212px;letter-spacing:-.75px">ATVI</div>
<div class="cb" style="top:230px"></div><div class="cl" style="top:229px;letter-spacing:-.75px">CMCSA</div>
<div class="cb" style="top:247px"></div><div class="cl" style="top:246px;letter-spacing:-.75px">FB</div>
<div class="cb" style="top:264px"></div><div class="cl" style="top:264px;letter-spacing:-.75px">FOXA</div>
<div class="cb" style="top:282px"></div><div class="cl" style="top:281px;letter-spacing:-.75px">FTR</div>
<div class="cb" style="top:299px"></div><div class="cl" style="top:298px;letter-spacing:-.75px">GOOG</div>
<div class="cb" style="top:316px"></div><div class="cl" style="top:316px;letter-spacing:-.75px">INTC</div>
<div class="cb" style="top:334px"></div><div class="cl" style="top:333px;letter-spacing:-.75px">MSFT</div>
<div class="cb" style="top:351px"></div><div class="cl" style="top:350px;letter-spacing:-.75px">MU</div>
<div class="cb" style="top:368px"></div><div class="cl" style="top:368px;letter-spacing:-.75px">NFLX</div>
<div class="cb" style="top:386px"></div><div class="cl" style="top:385px;letter-spacing:-.75px">QQQ</div>
<div class="cb" style="top:403px"></div><div class="cl" style="top:402px;letter-spacing:-.75px">SIRI</div>
<!-- bottom tab strip / status bar -->
<div class="a" style="left:131px;top:586px;width:820px;height:1px;background:#a6a6a6"></div>
<div class="a" style="left:310px;top:586px;width:641px;height:1px;background:#8e8e8e"></div>
<div class="a" style="left:212px;top:586px;width:99px;height:28px;background:#fff;border:1px solid #9a9a9a;border-top:none"></div>
<div class="t" style="left:218px;top:593.7px;font-weight:bold;font-size:11.6px;letter-spacing:0">Worksheet 1</div>
<div class="tri" style="left:297px;top:599px;border-top-color:#8a8a8a"></div>
<div class="a" style="left:9px;top:618px;width:942px;height:1px;background:#b4b4b4"></div>
<svg class="a" style="left:139px;top:595px" width="14" height="14" viewBox="0 0 14 14"><rect x="0" y="11.5" width="1" height="1.5" fill="#a0a0a0"/><rect x="2.2" y="10" width="1.4" height="3" fill="#a0a0a0"/><rect x="4.8" y="8" width="1.4" height="5" fill="#a0a0a0"/><rect x="7.4" y="6" width="1.4" height="7" fill="#a0a0a0"/><rect x="10" y="8" width="1.4" height="5" fill="#a0a0a0"/><rect x="12.2" y="7" width="1.2" height="6" fill="#a0a0a0"/><path d="M9.8 0 v7 M6.3 3.5 h7" stroke="#25c455" stroke-width="2.6"/><path d="M9.8 2 v3 M8.3 3.5 h3" stroke="#d8ffe2" stroke-width=".9"/></svg>
<svg class="a" style="left:162px;top:595px" width="15" height="14" viewBox="0 0 15 14"><rect x="0" y="1" width="2.6" height="2.6" fill="#a8a8a8"/><rect x="3.5" y="1" width="2.6" height="2.6" fill="#a8a8a8"/><rect x="7" y="1" width="2.6" height="2.6" fill="#a8a8a8"/><rect x="10.5" y="1" width="2.6" height="2.6" fill="#a8a8a8"/><rect x="0" y="4.4" width="2.6" height="2.6" fill="#a8a8a8"/><rect x="3.5" y="4.4" width="2.6" height="2.6" fill="#a8a8a8"/><rect x="7" y="4.4" width="2.6" height="2.6" fill="#a8a8a8"/><rect x="10.5" y="4.4" width="2.6" height="2.6" fill="#a8a8a8"/><rect x="0" y="7.8" width="2.6" height="2.6" fill="#a8a8a8"/><rect x="3.5" y="7.8" width="2.6" height="2.6" fill="#a8a8a8"/><rect x="7" y="7.8" width="2.6" height="2.6" fill="#a8a8a8"/><rect x="10.5" y="7.8" width="2.6" height="2.6" fill="#a8a8a8"/><rect x="0" y="11.2" width="2.6" height="2.6" fill="#a8a8a8"/><rect x="3.5" y="11.2" width="2.6" height="2.6" fill="#a8a8a8"/><rect x="7" y="11.2" width="2.6" height="2.6" fill="#a8a8a8"/><rect x="10.5" y="11.2" width="2.6" height="2.6" fill="#a8a8a8"/><path d="M10.4 0 v7 M6.9 3.5 h7" stroke="#25c455" stroke-width="2.6"/><path d="M10.4 2 v3 M8.9 3.5 h3" stroke="#d8ffe2" stroke-width=".9"/></svg>
<svg class="a" style="left:187px;top:596px" width="14" height="12" viewBox="0 0 14 12"><path d="M0 1 H13.5 M0 4.2 H13.5 M0 7.4 H13.5 M0 10.6 H13.5" stroke="#8f8f8f" stroke-width="1.4"/></svg>
</body></html>
